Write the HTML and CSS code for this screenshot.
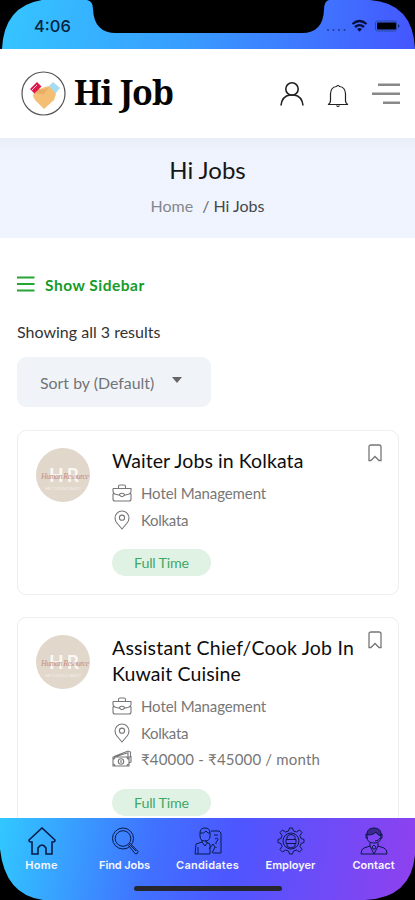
FILE: index.html
```html
<!DOCTYPE html>
<html lang="en">
<head>
<meta charset="utf-8">
<title>Hi Jobs</title>
<link rel="stylesheet" href="styles.css">
</head>
<body>
<svg class="defs" width="0" height="0">
  <symbol id="bag" viewBox="0 0 20 18"><path d="M1 4.500h18v3q0 2-2.500 2.700l-4.100 1M1 4.500v3q0 2 2.500 2.700l4.100 1M1 9.500V15q0 2 2 2h14q2 0 2-2V9.500M6.500 4V2.500Q6.500 1 8 1h4q1.500 0 1.500 1.500V4M7.600 10.200q2.400-2 4.800 0v1q-2.400 3-4.800 0z"/></symbol>
  <symbol id="pin" viewBox="0 0 16 20"><path d="M8 19L3.300 13.500Q1 10.800 1 8a7 7 0 0 1 14 0q0 2.800-2.300 5.500z"/><circle cx="8" cy="7.700" r="2.600"/></symbol>
  <symbol id="cash" viewBox="0 0 20 18"><path d="M1 7h16v9H1zM2 6.500L16 1l2.500 1v4.500l-1.500 1M4 6.500l12-3.800v4M17 13l2-1V6M1 9q2 0 2-2M1 14q2 0 2 2M17 9q-2 0-2-2M17 14q-2 0-2 2"/><circle cx="9" cy="11.500" r="2.700"/><path d="M9 10v3"/></symbol>
  <symbol id="mark" viewBox="0 0 14 18"><path d="M1 16.500V3q0-2 2-2h8q2 0 2 2v13.500h-2l-4-4-4 4z"/></symbol>
</svg>
<div class="phone">
  <div class="status">
    <svg class="notch" width="415" height="49" viewBox="0 0 415 49"><path d="M0 0H87Q93 1 93 9Q94 33 116 33H302Q323 33 324 10Q324 1 329 0H415V49Q413 3 370 0H42Q4 6 2 49H0z"/></svg>
    <span class="time">4:06</span>
    <svg class="signals" width="74" height="18" viewBox="0 0 74 18"><g fill="#243a8e"><circle cx="2" cy="13" r="1"/><circle cx="7.500" cy="13" r="1"/><circle cx="13" cy="13" r="1"/><circle cx="18.500" cy="13" r="1"/></g><g fill="none" stroke="#07103c" stroke-width="2.300"><path d="M26.500 7q7-6 14 0M29 10q4.500-3.800 9 0"/></g><path d="M31 12q2.500-2 5 0l-2.500 2.700z" fill="#07103c"/><rect x="49.500" y="4" width="21" height="10" rx="2" fill="none" stroke="#254a9f"/><rect x="51" y="5.500" width="19" height="7" rx="1" fill="#000"/><path d="M72 7q3 2 0 4z" fill="#16266b"/></svg>
  </div>
  <header class="header">
    <svg class="logo" width="46" height="46" viewBox="0 0 46 46"><circle cx="23.500" cy="22.500" r="21.500" fill="#fff" stroke="#555" stroke-width="1.200"/><path d="M29 15l4-4 7 6-5 6z" fill="#a5dcf2"/><path d="M14 21l8-4 7-2 7 8-2 6-10 9-9-9-2-4z" fill="#f4bf75"/><path d="M18 18l5 1 6-3-5 7q-5 1-8-2z" fill="#e9ad66"/><path d="M10 18l7-7 4.500 4.500-7 7z" fill="#df174b"/><path d="M12 19l5-5" stroke="#fff" stroke-width=".8"/></svg>
    <span class="brand">Hi Job</span>
    <svg class="line-icon user" width="26" height="26" viewBox="0 0 26 26"><circle cx="13" cy="8" r="6.200"/><path d="M2 24.500q1-9.500 9-10.500h4q8 1 9 10.500"/></svg>
    <svg class="line-icon bell" width="22" height="24" viewBox="0 0 22 24"><path d="M1 20.500q2.500-1 2.500-4V9.500Q4 3 9.500 2.500q1.500-2 3 0Q18 3 18.500 9.500v7q0 3 2.500 4zM9.500 21.500q1.500 2 3 0"/></svg>
    <svg class="menu" width="28" height="22" viewBox="0 0 28 22"><path d="M6 1.800h22M0 10.800h28M11 19.800h17"/></svg>
  </header>
  <section class="hero">
    <h1><span>Hi Jobs</span></h1>
    <p><span class="crumb">Home</span><span class="slash">/</span><span class="here">Hi Jobs</span></p>
  </section>
  <main class="content">
    <div class="sidebar-toggle"><svg width="18" height="16" viewBox="0 0 18 16"><path d="M0 1.500h17.500M0 8h17.500M0 14.500h17.500"/></svg><span>Show Sidebar</span></div>
    <p class="results"><span>Showing all 3 results</span></p>
    <div class="sort"><span>Sort by (Default)</span><i></i></div>
    <article class="card">
      <svg class="avatar" width="54" height="54" viewBox="0 0 54 54"><circle cx="27" cy="27" r="27"/><text class="mono" x="13" y="34" textLength="30">HR</text><text class="script" x="5" y="31" textLength="48">Human Resource</text><text class="tiny" x="9" y="42" textLength="36">HR CONSULTANCY</text></svg>
      <div class="info">
        <h2><span class="t1">Waiter Jobs in Kolkata</span></h2>
        <div class="meta"><svg width="20" height="18"><use href="#bag"/></svg><span class="m1">Hotel Management</span></div>
        <div class="meta"><svg width="20" height="20"><use href="#pin"/></svg><span class="m2">Kolkata</span></div>
        <div class="badge"><span>Full Time</span></div>
      </div>
      <svg class="bookmark" width="14" height="18"><use href="#mark"/></svg>
    </article>
    <article class="card second">
      <svg class="avatar" width="54" height="54" viewBox="0 0 54 54"><circle cx="27" cy="27" r="27"/><text class="mono" x="13" y="34" textLength="30">HR</text><text class="script" x="5" y="31" textLength="48">Human Resource</text><text class="tiny" x="9" y="42" textLength="36">HR CONSULTANCY</text></svg>
      <div class="info">
        <h2><span class="t2">Assistant Chief/Cook Job In</span><br><span class="t3">Kuwait Cuisine</span></h2>
        <div class="meta"><svg width="20" height="18"><use href="#bag"/></svg><span class="m1">Hotel Management</span></div>
        <div class="meta"><svg width="20" height="20"><use href="#pin"/></svg><span class="m2">Kolkata</span></div>
        <div class="meta"><svg width="20" height="18"><use href="#cash"/></svg><span class="m3">₹40000 - ₹45000 / month</span></div>
        <div class="badge"><span>Full Time</span></div>
      </div>
      <svg class="bookmark" width="14" height="18"><use href="#mark"/></svg>
    </article>
  </main>
  <nav class="nav">
    <a><svg width="28" height="28" viewBox="0 0 28 28"><path stroke-width="1.600" d="M1 13L14 1l13 12q0 2-2 2h-1v12h-6v-6q-4-6-8 0v6H4V15H3q-2 0-2-2z"/></svg><span class="n1">Home</span></a>
    <a><svg width="28" height="28" viewBox="0 0 28 28"><circle cx="12" cy="11.500" r="10.500"/><circle cx="12" cy="11.500" r="7.800"/><path d="M17.500 18.500l2-2 7.500 8q0 2.500-2.500 2.500zM20 19l5 5"/></svg><span class="n2">Find Jobs</span></a>
    <a><svg width="28" height="28" viewBox="0 0 28 28"><path d="M6 6q0-5 5-5t5 5v3q0 5-5 5t-5-5zM6 6q4 1 6-2 2 3 4 2M8 13v2l-6 2-1 10h15V17l-4-2v-2M8 15l3 4 3-4M4 20v7M17 4h8l2 2v20h-8M20 8h4M21 12q3-2 3 1l-2 2v2M22 20v1M15 22l4-5 2 3-3 6"/></svg><span class="n3">Candidates</span></a>
    <a><svg width="28" height="28" viewBox="0 0 28 28"><path d="M11.500 4l1-3h3l1 3 3 1 3-2 2.500 2.500-2 3 1 3 3 1v3l-3 1-1 3 2 3-2.500 2.500-3-2-3 1-1 3h-3l-1-3-3-1-3 2L3 22.500l2-3-1-3-3-1v-3l3-1 1-3-2-3L5.500 3l3 2z"/><circle cx="14" cy="14" r="8"/><path d="M10 9.500q4-4 8 0v3h-8zM9 12.500h10v4H9zM10 16.500h8v3q-4 3-8 0z"/></svg><span class="n4">Employer</span></a>
    <a><svg width="28" height="28" viewBox="0 0 28 28"><path fill="#1b1756" fill-opacity=".65" d="M7 8V6q1-5 7-5t7 5v3q-4-1-5-4-2 3-9 3z"/><path d="M7 7v3q0 6 7 6t7-6V7M7 7H6v4h2M21 7h1v4h-2q-1 3-5 3M10 16v3l-6 2q-3 1-3 6h26q0-5-3-6l-6-2v-3M10 19l4 8 4-8M12 20l2-2 2 2-1 2h-2z"/></svg><span class="n5">Contact</span></a>
    <svg class="frame" width="415" height="82" viewBox="0 0 415 82"><path d="M0 31Q5 77 43 82H0zM415 37Q411 80 365 82H415z"/></svg>
    <i class="home-bar"></i>
  </nav>
</div>
</body>
</html>
```
FILE: styles.css
```css
* { box-sizing: border-box; }
body { margin: 0; background: #fff; font-family: Lato, "Noto Sans", sans-serif; color: #161616; }
h1, h2, p { margin: 0; font-weight: 400; }
span { white-space: nowrap; }
.defs { position: absolute; }
.phone { width: 415px; height: 900px; overflow: hidden; display: flex; flex-direction: column; background: #fff; }
.status { position: relative; height: 49px; flex: none; display: flex; justify-content: space-between; padding: 17px 15px 0 34px; background: linear-gradient(100deg, #35c6ff 0%, #389dff 45%, #4555ff 100%); }
.notch { position: absolute; left: 0; top: 0; }
.time { position: relative; font: 500 16.5px/19px Inter, sans-serif; color: #06243b; }
.signals { position: relative; }
.header { height: 89px; flex: none; display: flex; align-items: center; padding: 0 15px 0 20px; background: #fff; }
.brand { font: 700 34px/46px "Noto Serif", "Liberation Serif", serif; letter-spacing: -1px; color: #050505; margin: -4px 0 0 8px; width: 205px; }
.line-icon { fill: none; stroke: #222; stroke-width: 1.600; }
.bell { stroke-width: 1.200; margin-left: 22px; margin-top: 4px; }
.menu { margin-left: auto; stroke: #888; stroke-width: 2.600; }
.hero { height: 100px; flex: none; background: linear-gradient(180deg, #e9edf7 0, #eff3fd 14px, #f0f4fe 100%); text-align: center; padding-top: 16px; }
.hero h1 { font-size: 24px; line-height: 32px; }
.hero p { display: flex; justify-content: center; font-size: 16px; line-height: 24px; margin-top: 8px; }
.crumb { color: #85878d; }
.slash { margin: 0 4px 0 9px; color: #666; }
.here { color: #45474c; }
.content { flex: 1; min-height: 0; overflow: hidden; padding: 36px 16px 0 17px; }
.sidebar-toggle { display: flex; align-items: center; gap: 10px; height: 24px; color: #159b28; font-size: 15.5px; font-weight: 700; letter-spacing: .5px; }
.sidebar-toggle svg { stroke: #24a534; stroke-width: 2; margin-top: -4px; }
.sidebar-toggle span { margin-top: -2px; }
.results { font-size: 16px; line-height: 24px; margin-top: 22px; color: #333; }
.sort { height: 50px; width: 194px; margin-top: 13px; border-radius: 9px; background: #f0f4f8; display: flex; align-items: center; padding: 0 29px 0 23px; justify-content: space-between; font-size: 15.900px; color: #707478; }
.sort i { border: 5px solid transparent; border-top: 6px solid #666; border-bottom: 0; margin-top: -4px; }
.card { display: flex; height: 165px; margin-top: 23px; border: 1.500px solid #eeeeef; border-radius: 9px; padding: 17px 16px 0 18px; }
.second { height: 230px; margin-top: 22px; }
.avatar { flex: none; }
.avatar circle { fill: #e1d7ca; }
.mono { font: 700 19px Lato, sans-serif; fill: #faf8f4; }
.script { font: italic 8px "Liberation Serif", serif; fill: #c49089; }
.tiny { font: 4px Lato, sans-serif; fill: #f6efe7; }
.info { flex: 1; margin-left: 22px; min-width: 0; }
.info h2 { font-size: 19.500px; line-height: 26px; color: #0e0e0e; margin: 0 0 6px; }
.t1 { letter-spacing: .08px; }
.t2 { letter-spacing: .2px; }
.t3 { letter-spacing: .1px; }
.meta { display: flex; align-items: center; height: 26.500px; font-size: 15px; color: #777; }
.meta svg { flex: none; fill: none; stroke: #777; stroke-width: 1.100; margin-right: 9px; }
.m1 { letter-spacing: -.1px; }
.m2 { letter-spacing: -.3px; }
.m3 { letter-spacing: .18px; }
.badge { width: 99px; height: 27px; margin-top: 16px; border-radius: 14px; background: #e0f2e4; color: #42a867; display: flex; align-items: center; justify-content: center; font-size: 14.300px; letter-spacing: -.2px; }
.bookmark { flex: none; fill: none; stroke: #777; stroke-width: 1.300; margin-top: -4px; }
.nav { position: relative; height: 82px; flex: none; display: flex; background: linear-gradient(100deg, #31c8ff 0%, #4072ff 36%, #4d56ff 56%, #9140ee 100%); }
.nav a { flex: 1; display: flex; flex-direction: column; align-items: center; padding-top: 9px; color: #f4f6ff; font: 600 11px/16px Inter, sans-serif; }
.nav a svg { fill: none; stroke: #071b4a; stroke-width: 1; margin-bottom: 2px; }
.n1 { letter-spacing: .25px; }
.n2 { letter-spacing: -.1px; }
.n3 { letter-spacing: .25px; }
.frame { position: absolute; left: 0; top: 0; }
.home-bar { position: absolute; left: 134px; top: 68px; width: 148px; height: 5px; border-radius: 3px; background: #26262e; }
```
